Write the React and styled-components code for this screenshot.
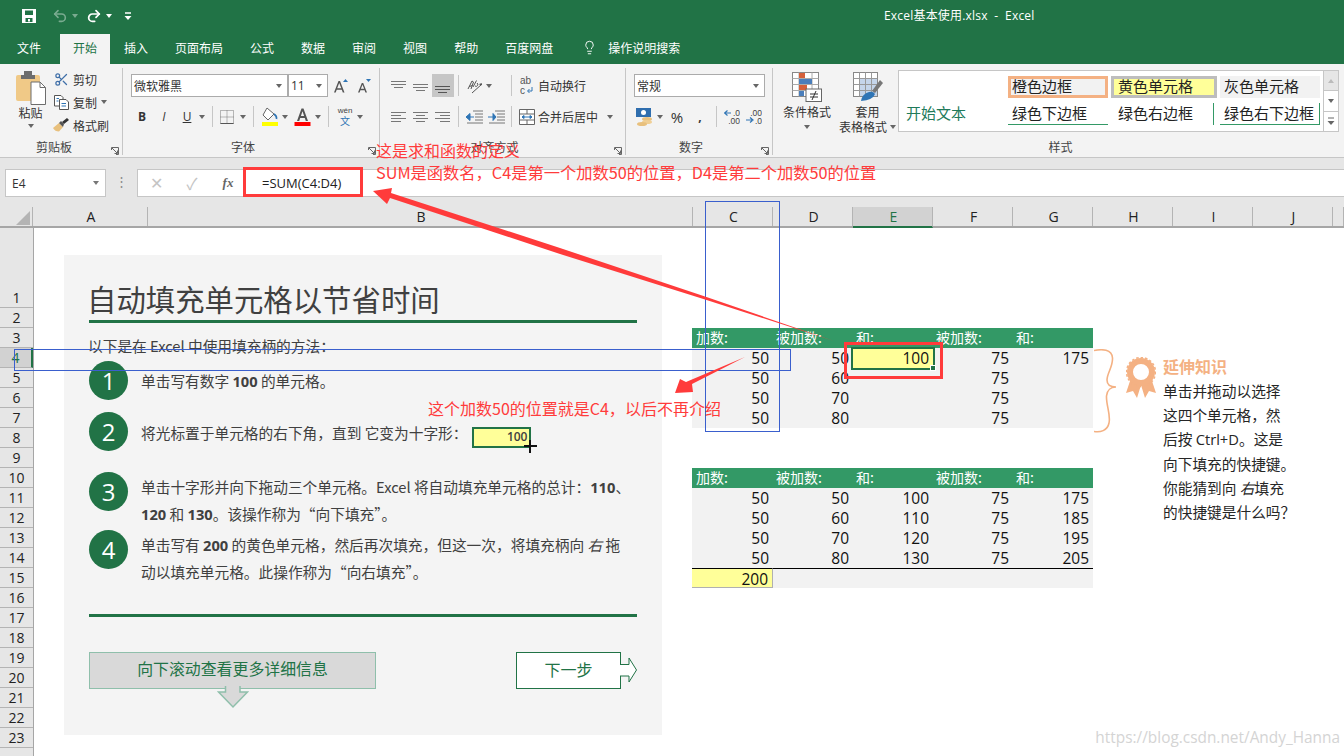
import styled, { createGlobalStyle } from "styled-components";
import { Redo2, Undo2, Scissors, Lightbulb } from "lucide-react";

const GREEN = "#217346";
const FONT = `"Open Sans", "Noto Sans CJK SC", sans-serif`;
const CJK = `"Noto Sans CJK SC", "Open Sans", sans-serif`;

// full width punctuation of the Chinese copy
const COMMA = "\uFF0C";
const COLON = "\uFF1A";
const QMARK = "\uFF1F";

const GlobalStyle = createGlobalStyle`
  html, body { margin: 0; padding: 0; background: #fff; }
  body { font-family: ${CJK}; color: #333; }
`;

const Page = styled.div`
  position: relative;
  width: 1344px;
  height: 756px;
  overflow: hidden;
  background: #fff;
`;

/* title bar */
const TitleBar = styled.div`
  display: flex;
  align-items: center;
  height: 32px;
  background: ${GREEN};
  color: #fff;
  padding-left: 22px;
`;
const QuickAccess = styled.div`
  display: flex;
  align-items: center;
  width: 862px;
  height: 100%;
`;
const QuickBtn = styled.span`
  display: flex;
  align-items: center;
  gap: 4px;
  margin-right: ${(p) => p.$gap || 0}px;
  opacity: ${(p) => (p.$dim ? 0.4 : 1)};
`;
const Caret = styled.span`
  display: inline-block;
  flex: none;
  width: 0;
  height: 0;
  margin-left: ${(p) => p.$ml || 0}px;
  margin-top: ${(p) => p.$mt || 0}px;
  border-left: 3.5px solid transparent;
  border-right: 3.5px solid transparent;
  border-top: 4px solid ${(p) => p.$color || "#666"};
`;
const DocTitle = styled.div`
  font-size: 12px;
  font-family: ${FONT};
  white-space: pre;
  letter-spacing: 0.2px;
  padding-bottom: 3px;
`;

/* tabs */
const TabBar = styled.div`
  display: flex;
  align-items: flex-end;
  gap: 1px;
  height: 32px;
  background: ${GREEN};
  padding-left: 4px;
`;
const Tab = styled.div`
  height: 30px;
  line-height: 27px;
  padding: 0 13px;
  font-size: 12px;
  color: ${(p) => (p.$active ? GREEN : "#fff")};
  background: ${(p) => (p.$active ? "#f3f3f3" : "transparent")};
  margin-right: ${(p) => p.$gap || 0}px;
`;
const TellMe = styled.div`
  display: flex;
  align-items: center;
  gap: 11px;
  height: 30px;
  padding-bottom: 4px;
  box-sizing: border-box;
  margin-left: 15px;
  font-size: 12px;
  color: #fff;
`;

/* ribbon */
const Ribbon = styled.div`
  display: flex;
  height: 94px;
  box-sizing: border-box;
  background: #f3f3f3;
  border-bottom: 1px solid #c6c6c6;
  color: #333;
  font-size: 12px;
`;
const Group = styled.div`
  position: relative;
  flex: none;
  width: ${(p) => p.$w}px;
  display: flex;
  flex-direction: column;
  box-sizing: border-box;
  padding-left: ${(p) => p.$pad || 0}px;
  margin-top: 4px;
  margin-bottom: 2px;
  border-right: ${(p) => (p.$last ? "none" : "1px solid #c6c6c6")};
`;
const GroupBody = styled.div`
  flex: 1;
  display: flex;
  min-height: 0;
`;
const GroupLabel = styled.div`
  height: 16px;
  line-height: 16px;
  text-align: center;
  font-size: 12px;
  color: #444;
  margin-left: ${(p) => -(p.$pad || 0)}px;
`;
const Launcher = styled.svg`
  position: absolute;
  right: 3px;
  bottom: 0;
`;
const RowStack = styled.div`
  display: flex;
  flex-direction: column;
  gap: 8px;
  padding-top: 6px;
`;
const ToolRow = styled.div`
  display: flex;
  align-items: center;
  height: 23px;
`;
const Tool = styled.span`
  display: flex;
  align-items: center;
  justify-content: center;
  flex: none;
  width: ${(p) => p.$w || 22}px;
  height: 23px;
  font-size: 12px;
  font-weight: ${(p) => (p.$bold ? 700 : 400)};
  font-style: ${(p) => (p.$italic ? "italic" : "normal")};
  text-decoration: ${(p) => (p.$under ? "underline" : "none")};
  font-family: ${(p) => (p.$latin ? FONT : CJK)};
  background: ${(p) => (p.$on ? "#c6c6c6" : "transparent")};
  margin-left: ${(p) => p.$ml || 0}px;
  margin-right: ${(p) => p.$gap || 0}px;
`;
const ToolSep = styled.span`
  flex: none;
  width: 1px;
  height: 21px;
  background: #c6c6c6;
  margin-left: ${(p) => p.$m || 6}px;
  margin-right: ${(p) => p.$mr ?? (p.$m || 6)}px;
`;
const TextTool = styled.span`
  display: flex;
  align-items: center;
  gap: ${(p) => p.$gap || 4}px;
  font-size: 12px;
  white-space: nowrap;
`;
const PercentMark = styled.span`
  font-size: 15px;
`;
const PasteBox = styled.div`
  width: 49px;
  margin-left: 6px;
  padding-top: 3px;
  display: flex;
  flex-direction: column;
  align-items: center;
  line-height: 15px;
  font-size: 12px;
`;
const ClipList = styled.div`
  display: flex;
  flex-direction: column;
  gap: 5px;
  padding-top: 2px;
  margin-left: -2px;
`;
const ClipItem = styled.div`
  display: flex;
  align-items: center;
  gap: 4px;
  height: 18px;
  white-space: nowrap;
`;
const ClipIcon = styled.span`
  display: flex;
  justify-content: center;
  width: 16px;
`;
const SelectBox = styled.div`
  display: flex;
  align-items: center;
  justify-content: space-between;
  width: ${(p) => p.$w}px;
  height: 23px;
  box-sizing: border-box;
  padding: 0 5px 0 2px;
  background: #fff;
  border: 1px solid #ababab;
  font-family: ${(p) => (p.$latin ? FONT : CJK)};
`;
const BigTool = styled.div`
  flex: none;
  width: ${(p) => p.$w || 60}px;
  padding-top: 4px;
  display: flex;
  flex-direction: column;
  align-items: center;
  text-align: center;
  line-height: 15px;
  font-size: 12px;
  white-space: nowrap;
`;
const BigLabel = styled.span`
  display: flex;
  align-items: center;
  gap: 3px;
  margin-top: ${(p) => p.$mt || 0}px;
`;
const Gallery = styled.div`
  display: grid;
  grid-template-columns: 109px 103px 109px 103px;
  grid-template-rows: 22px 22px;
  row-gap: 5px;
  flex: none;
  width: 426px;
  height: 62px;
  box-sizing: border-box;
  margin: 2px 0 0 0;
  padding-top: 5px;
  background: #fff;
  border: 1px solid #c6c6c6;
`;
const StyleCell = styled.div`
  height: 22px;
  box-sizing: border-box;
  display: flex;
  align-items: center;
  padding-left: ${(p) => p.$pl ?? 4}px;
  padding-bottom: 3px;
  font-size: 15px;
  color: ${(p) => p.$color || "#222"};
  background: ${(p) => p.$bg || "transparent"};
  border: ${(p) => p.$border || "none"};
  border-bottom: ${(p) => p.$bottom || ""};
  border-right: ${(p) => p.$right || ""};
  margin-right: ${(p) => p.$mr ?? 3}px;
  grid-column: ${(p) => p.$col || "auto"};
  grid-row: ${(p) => p.$row || "auto"};
  white-space: nowrap;
  overflow: visible;
`;
const GalleryScroll = styled.div`
  flex: none;
  display: flex;
  flex-direction: column;
  width: 15px;
  height: 62px;
  margin-top: 2px;
  box-sizing: border-box;
  border: 1px solid #c6c6c6;
  border-left: none;
`;
const ScrollBtn = styled.span`
  flex: 1;
  display: flex;
  align-items: center;
  justify-content: center;
  background: ${(p) => (p.$off ? "#e6e6e6" : "#fff")};
  border-bottom: ${(p) => (p.$last ? "none" : "1px solid #c6c6c6")};
`;
const UpCaret = styled(Caret)`
  transform: rotate(180deg);
`;

/* formula bar */
const FormulaBar = styled.div`
  display: flex;
  align-items: flex-start;
  height: 49px;
  box-sizing: border-box;
  padding: 11px 0 0 5px;
  background: #e6e6e6;
`;
const NameBox = styled.div`
  display: flex;
  align-items: center;
  justify-content: space-between;
  width: 101px;
  height: 28px;
  box-sizing: border-box;
  padding: 0 6px;
  background: #fff;
  border: 1px solid #c6c6c6;
  font-family: ${FONT};
  font-size: 12px;
`;
const Dots = styled.span`
  width: 31px;
  text-align: center;
  line-height: 24px;
  color: #8a8a8a;
  font-size: 13px;
  font-family: ${FONT};
`;
const FormulaBox = styled.div`
  flex: 1;
  display: flex;
  align-items: center;
  height: 28px;
  box-sizing: border-box;
  background: #fff;
  border-top: 1px solid #c6c6c6;
  border-bottom: 1px solid #c6c6c6;
  border-left: 1px solid #c6c6c6;
`;
const FormulaBtn = styled.span`
  width: 36px;
  text-align: center;
  font-size: ${(p) => (p.$serif ? 13 : 16)}px;
  font-family: ${(p) => (p.$serif ? `"Liberation Serif", serif` : FONT)};
  font-style: ${(p) => (p.$serif ? "italic" : "normal")};
  font-weight: ${(p) => (p.$serif ? 700 : 400)};
  color: ${(p) => (p.$serif ? "#666" : "#c4c4c4")};
`;
const FormulaText = styled.div`
  margin-left: 7px;
  padding-left: 9px;
  font-family: ${FONT};
  font-size: 13px;
  color: #222;
`;

/* column headers */
const ColBar = styled.div`
  display: flex;
  height: 21px;
  background: #e6e6e6;
  box-sizing: border-box;
  border-bottom: 2px solid #a6a6a6;
`;
const Corner = styled.div`
  flex: none;
  width: 33px;
  border-right: 1px solid #b4b4b4;
  box-sizing: border-box;
  display: flex;
  justify-content: flex-end;
  align-items: flex-end;
  padding: 0 2px 1px 0;
`;
const ColHead = styled.div`
  flex: none;
  width: ${(p) => p.$w}px;
  box-sizing: border-box;
  padding-left: 2px;
  text-align: center;
  font-family: ${FONT};
  font-size: 14px;
  line-height: 19px;
  height: ${(p) => (p.$on ? 21 : 19)}px;
  color: ${(p) => (p.$on ? GREEN : "#222")};
  background: ${(p) => (p.$on ? "#d2d2d2" : "transparent")};
  border-right: 1px solid #b4b4b4;
  border-bottom: ${(p) => (p.$on ? `2px solid ${GREEN}` : "none")};
`;

/* sheet */
const Sheet = styled.div`
  display: flex;
  height: 528px;
`;
const RowHeads = styled.div`
  flex: none;
  width: 34px;
  box-sizing: border-box;
  background: #e6e6e6;
  border-right: 1px solid #a6a6a6;
`;
const RowHead = styled.div`
  height: ${(p) => p.$h || 20}px;
  box-sizing: border-box;
  display: flex;
  align-items: flex-end;
  justify-content: center;
  font-family: ${FONT};
  font-size: 14px;
  line-height: 19px;
  color: ${(p) => (p.$on ? GREEN : "#222")};
  background: ${(p) => (p.$on ? "#d2d2d2" : "transparent")};
  border-bottom: 1px solid #b4b4b4;
  border-right: ${(p) => (p.$on ? `2px solid ${GREEN}` : "none")};
`;
const SheetBody = styled.div`
  flex: 1;
  display: flex;
  align-items: flex-start;
  padding: 27px 0 0 30px;
`;

/* guide card */
const Card = styled.div`
  flex: none;
  width: 598px;
  height: 480px;
  box-sizing: border-box;
  padding: 24px 25px 0;
  background: #f4f4f4;
`;
const Title = styled.h1`
  margin: 0 0 2px -2px;
  height: 39px;
  line-height: 39px;
  font-size: 29.4px;
  font-weight: 400;
  color: #404040;
  white-space: nowrap;
`;
const GreenRule = styled.div`
  height: 3px;
  background: ${GREEN};
`;
const Intro = styled.p`
  margin: 13px 0 0 -1px;
  height: 25px;
  line-height: 20px;
  font-size: 14.7px;
  color: #404040;
  white-space: nowrap;
`;
const Step = styled.div`
  display: flex;
  gap: 13px;
  height: ${(p) => p.$h}px;
`;
const StepNum = styled.div`
  flex: none;
  width: 39px;
  height: 39px;
  border-radius: 50%;
  background: ${GREEN};
  color: #fff;
  font-family: ${FONT};
  font-size: 24px;
  line-height: 39px;
  text-align: center;
`;
const StepText = styled.div`
  font-size: 14.7px;
  line-height: 26.5px;
  color: #404040;
  white-space: nowrap;
  margin-top: ${(p) => p.$mt || 0}px;

  & b {
    font-family: ${FONT};
    font-weight: 700;
  }
`;
const SampleCell = styled.span`
  display: inline-flex;
  align-items: center;
  justify-content: flex-end;
  vertical-align: -2px;
  width: 59px;
  height: 21px;
  box-sizing: border-box;
  margin-left: 5px;
  padding-right: 2px;
  background: #ffff99;
  border: 2px solid ${GREEN};
  font-family: ${FONT};
  font-size: 12px;
  font-weight: 600;
`;
const CardFooter = styled.div`
  display: flex;
  justify-content: space-between;
  align-items: flex-start;
  margin-top: 35px;
`;
const ScrollHint = styled.div`
  position: relative;
  width: 287px;
  height: 37px;
  box-sizing: border-box;
  background: #d9d9d9;
  border: 1.5px solid #8fbfab;
  color: ${GREEN};
  font-size: 15.9px;
  line-height: 31px;
  text-align: center;
`;
const NextStep = styled.div`
  position: relative;
  width: 105px;
  height: 37px;
  box-sizing: border-box;
  margin-right: 16px;
  background: #fff;
  border: 1px solid ${GREEN};
  color: ${GREEN};
  font-size: 16px;
  line-height: 33px;
  text-align: center;
`;
const HintArrow = styled.svg`
  position: absolute;
  left: 127px;
  top: 33px;
`;
const NextArrow = styled.svg`
  position: absolute;
  left: 103px;
  top: 4px;
`;

/* data tables */
const TablesCol = styled.div`
  flex: none;
  width: 401px;
  margin: 73px 0 0 30px;
  display: flex;
  flex-direction: column;
  gap: 40px;
`;
const DataTable = styled.div`
  display: grid;
  grid-template-columns: 81px repeat(4, 80px);
  grid-auto-rows: 20px;
  background: #f2f2f2;
`;
const HeadCell = styled.div`
  background: #339966;
  color: #fff;
  font-size: 14px;
  line-height: 19px;
  padding-left: ${(p) => p.$pl || 3}px;
  white-space: nowrap;
`;
const Cell = styled.div`
  box-sizing: border-box;
  font-family: ${FONT};
  font-size: 15.5px;
  line-height: 20px;
  color: #111;
  text-align: right;
  padding-right: 4px;
  background: ${(p) => p.$bg || "transparent"};
  border-top: ${(p) => (p.$line ? "1px solid #000" : "none")};
  border-right: ${(p) => (p.$total ? "1px solid #b0b0b0" : "none")};
  border-bottom: ${(p) => (p.$total ? "1px solid #b0b0b0" : "none")};
`;

/* side note */
const SideNote = styled.div`
  flex: none;
  display: flex;
  align-items: flex-start;
  margin: 94px 0 0 1px;
`;
const Medal = styled.svg`
  margin: 8px 7px 0 10px;
  flex: none;
`;
const BraceSvg = styled.svg`
  flex: none;
`;
const NoteText = styled.div`
  font-size: 14.7px;
  line-height: 24.2px;
  color: #262626;
  white-space: nowrap;

  & span {
    font-family: ${FONT};
  }
`;
const NoteHead = styled.div`
  font-size: 16px;
  font-weight: 700;
  line-height: 20px;
  margin-top: 7px;
  margin-bottom: 3px;
  color: #f4b183;
`;

/* markup drawn over the screenshot */
const Markup = styled.svg`
  position: absolute;
  left: 0;
  top: 0;
  pointer-events: none;
`;
const Frame = styled.div`
  position: absolute;
  left: ${(p) => p.$x}px;
  top: ${(p) => p.$y}px;
  width: ${(p) => p.$w}px;
  height: ${(p) => p.$h}px;
  box-sizing: border-box;
  border: ${(p) => p.$b || 3}px solid ${(p) => p.$c || "#ff3b3b"};
`;
const Handle = styled.div`
  position: absolute;
  right: -3px;
  bottom: -3px;
  width: 6px;
  height: 6px;
  background: ${GREEN};
  border: 1px solid #fff;
  box-sizing: border-box;
`;
const RedNote = styled.div`
  position: absolute;
  left: ${(p) => p.$x}px;
  top: ${(p) => p.$y}px;
  font-size: ${(p) => p.$s || 16}px;
  line-height: 20px;
  color: #ff3b3b;
  white-space: nowrap;
`;
const Watermark = styled.div`
  position: absolute;
  right: 4px;
  top: 729px;
  font-family: ${FONT};
  font-size: 15.4px;
  line-height: 18px;
  color: #d4d4d4;
`;

const Lines = ({ rows, on }) => (
  <svg width="16" height="16" viewBox="0 0 16 16">
    {rows.map(([x1, x2, y], i) => (
      <line key={i} x1={x1} x2={x2} y1={y + 0.5} y2={y + 0.5} stroke={on ? "#555" : "#777"} strokeWidth="1" />
    ))}
  </svg>
);

const LauncherIcon = () => (
  <Launcher width="8" height="8" viewBox="0 0 8 8">
    <path d="M.5 3V.5H7.5V7.5H5M1 1l5 5M3.5 6.5H6.5V3.5" fill="none" stroke="#666" strokeWidth="1" />
  </Launcher>
);

const SaveIcon = () => (
  <svg width="14" height="14" viewBox="0 0 14 14">
    <path fillRule="evenodd" fill="#fff" d="M0 0H14V14H0ZM3 1.5V6H11V1.5ZM3.5 9V13H10.5V9ZM6 10H8V12.5H6Z" />
  </svg>
);

const CustomizeIcon = () => (
  <svg width="8" height="9" viewBox="0 0 8 9">
    <path d="M1 1H7" stroke="#fff" strokeWidth="1.5" />
    <path d="M0.5 4H7.5L4 8Z" fill="#fff" />
  </svg>
);

const PasteIcon = () => (
  <svg width="30" height="34" viewBox="0 0 30 34">
    <rect x="0" y="4" width="24" height="26" rx="2" fill="#f0c987" />
    <rect x="8" y="0" width="8" height="6" fill="#6d6d6d" />
    <rect x="5" y="4" width="14" height="4" fill="#6d6d6d" />
    <path d="M15 11H24L29.5 16.5V33.5H15Z" fill="#fff" stroke="#6d6d6d" />
    <path d="M24 11V16.5H29.5" fill="none" stroke="#6d6d6d" />
  </svg>
);

const CopyIcon = () => (
  <svg width="15" height="15" viewBox="0 0 15 15">
    <path d="M.5.5H7L9 2.5V11H.5Z" fill="#fff" stroke="#555" />
    <path d="M5.5 4.5H12L14.5 7V14.5H5.5Z" fill="#fff" stroke="#555" />
    <path d="M2.5 3.5H5M2.5 6H4.5M7.5 8.5H12M7.5 11H12" stroke="#2f75b5" />
  </svg>
);

const BrushIcon = () => (
  <svg width="16" height="14" viewBox="0 0 16 14">
    <path d="M0 10L6 5L10 9L6 13.5Q2 13.5 0 10Z" fill="#e8c07d" />
    <path d="M6 5L8 3L11 6L10 9Z" fill="#555" />
    <path d="M9 4L14 0L16 2L11 6Z" fill="#333" />
  </svg>
);

const BorderIcon = () => (
  <svg width="14" height="14" viewBox="0 0 14 14">
    <path d="M.5.5H13.5V13.5H.5ZM7 .5V13.5M.5 7H13.5" fill="none" stroke="#777" strokeDasharray="1 1" />
    <path d="M.5 13.5H13.5" stroke="#555" />
  </svg>
);

const FillIcon = () => (
  <svg width="18" height="19" viewBox="0 0 18 19">
    <path d="M6 1L13 7L7 13L2 8Z" fill="#fff" stroke="#666" />
    <path d="M13 7Q16 9 15.5 12" fill="none" stroke="#2f75b5" strokeWidth="1.6" />
    <rect x="1" y="15" width="16" height="4" fill="#ffff00" />
  </svg>
);

const ColorAIcon = () => (
  <svg width="17" height="19" viewBox="0 0 17 19">
    <path d="M3 14L7.5 1.5H9.5L14 14H11.8L10.8 11H6.2L5.2 14ZM6.9 9H10.1L8.5 4.2Z" fill="#555" />
    <rect x="0.5" y="15" width="16" height="4" fill="#ff0000" />
  </svg>
);

const GrowAIcon = ({ down }) => (
  <svg width="15" height="15" viewBox="0 0 15 15">
    <path
      d={down ? "M1 14.5L4.8 5H6.2L10 14.5H8.4L7.6 12.2H3.4L2.6 14.5ZM3.9 10.8H7.1L5.5 6.8Z" : "M0 14.5L4.5 3H6L10.5 14.5H8.8L7.8 11.7H2.7L1.7 14.5ZM3.2 10.2H7.3L5.2 5Z"}
      fill="#555"
    />
    <path d={down ? "M9 1H14L11.5 4Z" : "M9 4L11.5 1L14 4Z"} fill="#2f75b5" />
  </svg>
);

const PhoneticIcon = () => (
  <svg width="18" height="22" viewBox="0 0 18 22">
    <text x="9" y="7" textAnchor="middle" fontFamily="Liberation Sans" fontSize="8" fill="#444">wén</text>
    <text x="9" y="19" textAnchor="middle" fontFamily="Noto Sans CJK SC" fontSize="10" fill="#2f75b5">文</text>
  </svg>
);

const OrientIcon = () => (
  <svg width="18" height="16" viewBox="0 0 18 16">
    <path d="M2 11L6 3L7.5 4L5 11M3.2 8.5L6.5 7.5" fill="none" stroke="#555" />
    <path d="M7 9L10.5 2.5M9 8A1.8 1.8 0 1 0 11 5" fill="none" stroke="#555" />
    <path d="M6 15L16 6" stroke="#555" />
    <path d="M16 5L13 6L15 8Z" fill="#555" />
  </svg>
);

const WrapIcon = () => (
  <svg width="14" height="20" viewBox="0 0 14 20">
    <text x="0" y="8" fontFamily="Liberation Sans" fontSize="10" fill="#555">ab</text>
    <text x="0" y="18" fontFamily="Liberation Sans" fontSize="10" fill="#555">c</text>
    <path d="M12 11V15H8M9.5 13L7.5 15L9.5 17" fill="none" stroke="#2f75b5" />
  </svg>
);

const MergeIcon = () => (
  <svg width="16" height="16" viewBox="0 0 16 16">
    <path d="M.5.5H15.5V15.5H.5ZM.5 5H15.5M.5 11H15.5M8 .5V5M8 11V15.5" fill="#fff" stroke="#666" />
    <path d="M3 8H13M3 8L5 6.5V9.5ZM13 8L11 6.5V9.5Z" fill="#2f75b5" stroke="#2f75b5" />
  </svg>
);

const IndentIcon = ({ flip }) => (
  <svg width="17" height="14" viewBox="0 0 17 14">
    <path d="M7 1H17M9 4H17M9 7H17M9 10H17M1 13H17" stroke="#777" />
    <path d={flip ? "M0 7H5M5 3.5L8 7L5 10.5Z" : "M3 7H8M4 3.5L0 7L4 10.5Z"} fill="#2f75b5" stroke="#2f75b5" />
  </svg>
);

const CurrencyIcon = () => (
  <svg width="18" height="19" viewBox="0 0 18 19">
    <rect x="0" y="1" width="15" height="9" fill="#2f6eae" />
    <circle cx="7.5" cy="5.5" r="2.5" fill="#fff" />
    <ellipse cx="11" cy="12" rx="5" ry="2" fill="#e8c07d" />
    <ellipse cx="11" cy="15" rx="5" ry="2" fill="#f0cf95" />
    <ellipse cx="6" cy="17" rx="5" ry="2" fill="#e8c07d" />
  </svg>
);

const DecimalIcon = ({ more }) => (
  <svg width="16" height="16" viewBox="0 0 16 16">
    <text x="16" y="7" textAnchor="end" fontFamily="Liberation Sans" fontSize="8.5" fill="#444">{more ? ".00" : ".0"}</text>
    <text x="16" y="15" textAnchor="end" fontFamily="Liberation Sans" fontSize="8.5" fill="#444">{more ? ".0" : ".00"}</text>
    <path d={more ? "M0 11H6M4 8.5L7 11L4 13.5" : "M1 4H7M3.5 1.5L.5 4L3.5 6.5"} fill="none" stroke="#2f75b5" strokeWidth="1.2" />
  </svg>
);

const CondFormatIcon = () => (
  <svg width="30" height="30" viewBox="0 0 30 30">
    <rect x=".5" y=".5" width="26" height="24" fill="#fff" stroke="#888" />
    <path d="M7 .5V24.5M20 .5V24.5M.5 6.5H26.5M.5 12.5H26.5M.5 18.5H26.5" stroke="#aaa" />
    <rect x="7" y="1" width="6" height="5" fill="#d5603a" />
    <rect x="7" y="7" width="13" height="5" fill="#4a7ebb" />
    <rect x="7" y="13" width="8" height="5" fill="#d5603a" />
    <rect x="7" y="19" width="5" height="5" fill="#4a7ebb" />
    <rect x="14" y="17" width="15.5" height="12.5" fill="#fff" stroke="#666" />
    <path d="M18 22H26M18 25H26M20 28L24 19" stroke="#333" fill="none" />
  </svg>
);

const TableFormatIcon = () => (
  <svg width="30" height="30" viewBox="0 0 30 30">
    <rect x=".5" y=".5" width="24" height="24" fill="#fff" stroke="#888" />
    <rect x="7" y="7" width="17" height="17" fill="#c5d5ea" />
    <path d="M6.5 .5V24.5M12.5 .5V24.5M18.5 .5V24.5M.5 6.5H24.5M.5 12.5H24.5M.5 18.5H24.5" stroke="#999" />
    <path d="M19 19L27 8L30 11L22 21Z" fill="#777" />
    <path d="M8 29Q9 22 16 20Q20 19 22 22Q20 28 8 29Z" fill="#2f75b5" />
  </svg>
);

const MedalIcon = () => (
  <Medal width="30" height="42" viewBox="0 0 30 42">
    <path d="M5 21L0 36L7 34L11 41L15 28L19 41L23 34L30 36L25 21Z" fill="#f4b183" />
    <circle cx="15" cy="15" r="11" fill="#fff" stroke="#f4b183" strokeWidth="6" />
    <circle cx="15" cy="15" r="14.5" fill="none" stroke="#f4b183" strokeWidth="1.5" strokeDasharray="2.5 2" />
  </Medal>
);

const Brace = () => (
  <BraceSvg width="22" height="84" viewBox="0 0 22 84">
    <path
      d="M0 1.5C8 0 18 0 18.5 9C19 18 13 24 13 31C13 36 17 38 22 38C17 38 13 41 12.5 47C12 56 17 66 15 74C13.5 82 6 83.5 0 82.5"
      fill="none"
      stroke="#f4b183"
      strokeWidth="1.6"
    />
  </BraceSvg>
);

const tabs = ["插入", "页面布局", "公式", "数据", "审阅", "视图", "帮助", "百度网盘"];
const cols = [
  ["A", 115],
  ["B", 545],
  ["C", 80],
  ["D", 80],
  ["E", 80, true],
  ["F", 80],
  ["G", 80],
  ["H", 80],
  ["I", 80],
  ["J", 80],
  ["", 11],
];
const rowNums = Array.from({ length: 24 }, (_, i) => i + 1);
const heads = [
  ["加数:", 4],
  ["被加数:", 3],
  ["和:", 3],
  ["被加数:", 3],
  ["和:", 3],
];
const fullRows = [
  [50, 50, 100, 75, 175],
  [50, 60, 110, 75, 185],
  [50, 70, 120, 75, 195],
  [50, 80, 130, 75, 205],
];
const partRows = [
  [50, 50, 100, 75, 175],
  [50, 60, "", 75, ""],
  [50, 70, "", 75, ""],
  [50, 80, "", 75, ""],
];

function TableHead() {
  return heads.map(([h, pl], i) => (
    <HeadCell key={i} $pl={pl}>
      {h}
    </HeadCell>
  ));
}

function App() {
  return (
    <Page>
      <GlobalStyle />
      <TitleBar>
        <QuickAccess>
          <QuickBtn $gap={16}>
            <SaveIcon />
          </QuickBtn>
          <QuickBtn $gap={8} $dim>
            <Undo2 size={16} strokeWidth={2.4} />
            <Caret $color="#fff" />
          </QuickBtn>
          <QuickBtn $gap={12}>
            <Redo2 size={16} strokeWidth={2.6} />
            <Caret $color="#fff" />
          </QuickBtn>
          <CustomizeIcon />
        </QuickAccess>
        <DocTitle>Excel基本使用.xlsx  -  Excel</DocTitle>
      </TitleBar>
      <TabBar>
        <Tab $gap={5}>文件</Tab>
        <Tab $active>开始</Tab>
        {tabs.map((t) => (
          <Tab key={t}>{t}</Tab>
        ))}
        <TellMe>
          <Lightbulb size={15} strokeWidth={1.5} />
          操作说明搜索
        </TellMe>
      </TabBar>
      <Ribbon>
        <Group $w={123}>
          <GroupBody>
            <PasteBox>
              <PasteIcon />
              粘贴
              <Caret $mt={4} />
            </PasteBox>
            <ClipList>
              <ClipItem>
                <ClipIcon>
                  <Scissors size={15} color="#3f6fa8" />
                </ClipIcon>
                剪切
              </ClipItem>
              <ClipItem>
                <ClipIcon>
                  <CopyIcon />
                </ClipIcon>
                复制
                <Caret />
              </ClipItem>
              <ClipItem>
                <ClipIcon>
                  <BrushIcon />
                </ClipIcon>
                格式刷
              </ClipItem>
            </ClipList>
          </GroupBody>
          <GroupLabel $pad={14}>剪贴板</GroupLabel>
          <LauncherIcon />
        </Group>
        <Group $w={257} $pad={8}>
          <GroupBody>
            <RowStack>
              <ToolRow>
                <SelectBox $w={157}>
                  微软雅黑
                  <Caret />
                </SelectBox>
                <SelectBox $w={40} $latin>
                  11
                  <Caret />
                </SelectBox>
                <Tool $w={18} $ml={4} $gap={5}>
                  <GrowAIcon />
                </Tool>
                <Tool $w={18}>
                  <GrowAIcon down />
                </Tool>
              </ToolRow>
              <ToolRow>
                <Tool $latin $bold>B</Tool>
                <Tool $latin $italic>I</Tool>
                <Tool $w={24} $latin $under>U</Tool>
                <Caret />
                <ToolSep $m={7} />
                <Tool $w={14} $gap={6}>
                  <BorderIcon />
                </Tool>
                <Caret />
                <ToolSep $m={7} />
                <Tool $w={18} $gap={3}>
                  <FillIcon />
                </Tool>
                <Caret />
                <Tool $w={17} $ml={6} $gap={4}>
                  <ColorAIcon />
                </Tool>
                <Caret />
                <ToolSep $m={7} />
                <Tool $w={18} $gap={3}>
                  <PhoneticIcon />
                </Tool>
                <Caret />
              </ToolRow>
            </RowStack>
          </GroupBody>
          <GroupLabel $pad={24}>字体</GroupLabel>
          <LauncherIcon />
        </Group>
        <Group $w={246} $pad={8}>
          <GroupBody>
            <RowStack>
              <ToolRow>
                <Tool>
                  <Lines rows={[[0, 15, 3], [0, 15, 6], [3, 12, 9]]} />
                </Tool>
                <Tool>
                  <Lines rows={[[0, 15, 6], [0, 15, 9], [3, 12, 12]]} />
                </Tool>
                <Tool $on>
                  <Lines on rows={[[0, 15, 8], [0, 15, 11], [3, 12, 14]]} />
                </Tool>
                <ToolSep $m={4} />
                <Tool $w={32}>
                  <OrientIcon />
                  <Caret $ml={2} />
                </Tool>
                <ToolSep $m={16} $mr={8} />
                <TextTool $gap={4}>
                  <WrapIcon />
                  自动换行
                </TextTool>
              </ToolRow>
              <ToolRow>
                <Tool>
                  <Lines rows={[[0, 15, 3], [0, 10, 6], [0, 15, 9], [0, 10, 12]]} />
                </Tool>
                <Tool>
                  <Lines rows={[[0, 15, 3], [3, 12, 6], [0, 15, 9], [3, 12, 12]]} />
                </Tool>
                <Tool>
                  <Lines rows={[[0, 15, 3], [5, 15, 6], [0, 15, 9], [5, 15, 12]]} />
                </Tool>
                <ToolSep $m={4} />
                <Tool>
                  <IndentIcon />
                </Tool>
                <Tool>
                  <IndentIcon flip />
                </Tool>
                <ToolSep $m={4} $mr={7} />
                <TextTool $gap={3}>
                  <MergeIcon />
                  合并后居中
                  <Caret $ml={6} />
                </TextTool>
              </ToolRow>
            </RowStack>
          </GroupBody>
          <GroupLabel $pad={24}>对齐方式</GroupLabel>
          <LauncherIcon />
        </Group>
        <Group $w={147} $pad={8}>
          <GroupBody>
            <RowStack>
              <ToolRow>
                <SelectBox $w={131}>
                  常规
                  <Caret />
                </SelectBox>
              </ToolRow>
              <ToolRow>
                <Tool $gap={1}>
                  <CurrencyIcon />
                </Tool>
                <Caret />
                <Tool $w={28} $latin>
                  <PercentMark>%</PercentMark>
                </Tool>
                <Tool $w={18} $latin $bold>,</Tool>
                <ToolSep $m={7} />
                <Tool $w={16} $gap={6}>
                  <DecimalIcon />
                </Tool>
                <Tool $w={16}>
                  <DecimalIcon more />
                </Tool>
              </ToolRow>
            </RowStack>
          </GroupBody>
          <GroupLabel $pad={24}>数字</GroupLabel>
          <LauncherIcon />
        </Group>
        <Group $w={571} $last $pad={4}>
          <GroupBody>
            <BigTool $w={60}>
              <CondFormatIcon />
              <BigLabel $mt={2}>条件格式</BigLabel>
              <Caret $mt={6} />
            </BigTool>
            <BigTool $w={61}>
              <TableFormatIcon />
              <BigLabel $mt={2}>套用</BigLabel>
              <BigLabel>
                表格格式
                <Caret />
              </BigLabel>
            </BigTool>
            <Gallery>
              <StyleCell $col={1} $row={2} $color="#217a5a" $pl={7}>开始文本</StyleCell>
              <StyleCell $col={2} $row={1} $bg="#f2f2f2" $border="3px solid #f4b183" $pl={1}>橙色边框</StyleCell>
              <StyleCell $col={3} $row={1} $bg="#ffff99" $pl={4} $border="3px solid #bdbdbd">黄色单元格</StyleCell>
              <StyleCell $col={4} $row={1} $bg="#f2f2f2">灰色单元格</StyleCell>
              <StyleCell $col={2} $row={2} $bottom="1px solid #339966">绿色下边框</StyleCell>
              <StyleCell $col={3} $row={2} $pl={7} $mr={6} $right="1px solid #339966">绿色右边框</StyleCell>
              <StyleCell $col={4} $row={2} $bottom="1px solid #339966" $right="1px solid #339966">绿色右下边框</StyleCell>
            </Gallery>
            <GalleryScroll>
              <ScrollBtn $off>
                <UpCaret $color="#bbb" />
              </ScrollBtn>
              <ScrollBtn>
                <Caret />
              </ScrollBtn>
              <ScrollBtn $last>
                <svg width="8" height="9" viewBox="0 0 8 9">
                  <path d="M1 1H7" stroke="#666" />
                  <path d="M.5 4H7.5L4 8Z" fill="#666" />
                </svg>
              </ScrollBtn>
            </GalleryScroll>
          </GroupBody>
          <GroupLabel>样式</GroupLabel>
        </Group>
      </Ribbon>
      <FormulaBar>
        <NameBox>
          E4
          <Caret $color="#777" />
        </NameBox>
        <Dots>⋮</Dots>
        <FormulaBox>
          <FormulaBtn>✕</FormulaBtn>
          <FormulaBtn>✓</FormulaBtn>
          <FormulaBtn $serif>fx</FormulaBtn>
          <FormulaText>=SUM(C4:D4)</FormulaText>
        </FormulaBox>
      </FormulaBar>
      <ColBar>
        <Corner>
          <svg width="14" height="14" viewBox="0 0 14 14">
            <path d="M14 0V14H0Z" fill="#b4b4b4" />
          </svg>
        </Corner>
        {cols.map(([c, w, on]) => (
          <ColHead key={c || "K"} $w={w} $on={on}>
            {c}
          </ColHead>
        ))}
      </ColBar>
      <Sheet>
        <RowHeads>
          {rowNums.map((n) => (
            <RowHead key={n} $h={n === 1 ? 80 : 20} $on={n === 4}>
              {n < 24 ? n : ""}
            </RowHead>
          ))}
        </RowHeads>
        <SheetBody>
          <Card>
            <Title>自动填充单元格以节省时间</Title>
            <GreenRule />
            <Intro>以下是在 Excel 中使用填充柄的方法{COLON}</Intro>
            <Step $h={51}>
              <StepNum>1</StepNum>
              <StepText $mt={7}>
                单击写有数字 <b>100</b> 的单元格。
              </StepText>
            </Step>
            <Step $h={60}>
              <StepNum>2</StepNum>
              <StepText $mt={8}>
                将光标置于单元格的右下角{COMMA}直到 它变为十字形{COLON}
                <SampleCell>100</SampleCell>
              </StepText>
            </Step>
            <Step $h={58}>
              <StepNum>3</StepNum>
              <StepText $mt={2}>
                单击十字形并向下拖动三个单元格。Excel 将自动填充单元格的总计{COLON}<b>110</b>、
                <br />
                <b>120</b> 和 <b>130</b>。该操作称为“向下填充”。
              </StepText>
            </Step>
            <Step $h={84}>
              <StepNum>4</StepNum>
              <StepText $mt={2}>
                单击写有 <b>200</b> 的黄色单元格{COMMA}然后再次填充{COMMA}但这一次{COMMA}将填充柄向 <i>右</i> 拖
                <br />
                动以填充单元格。此操作称为“向右填充”。
              </StepText>
            </Step>
            <GreenRule />
            <CardFooter>
              <ScrollHint>
                向下滚动查看更多详细信息
                <HintArrow width="32" height="24" viewBox="0 0 32 24">
                  <path d="M8.5 0V6H1.5L16 21L30.5 6H23V0" fill="#d9d9d9" stroke="#8fbfab" strokeWidth="1.5" />
                </HintArrow>
              </ScrollHint>
              <NextStep>
                下一步
                <NextArrow width="18" height="27" viewBox="0 0 18 27">
                  <path d="M0 7.5H9V1L16.5 13L9 25V19H0" fill="#fff" stroke={GREEN} strokeWidth="1" />
                </NextArrow>
              </NextStep>
            </CardFooter>
          </Card>
          <TablesCol>
            <DataTable>
              <TableHead />
              {partRows.flat().map((v, i) => (
                <Cell key={i} $bg={i === 2 ? "#ffff99" : undefined}>
                  {v}
                </Cell>
              ))}
            </DataTable>
            <DataTable>
              <TableHead />
              {fullRows.flat().map((v, i) => (
                <Cell key={i}>{v}</Cell>
              ))}
              <Cell $line $total $bg="#ffff99">200</Cell>
              <Cell $line />
              <Cell $line />
              <Cell $line />
              <Cell $line />
            </DataTable>
          </TablesCol>
          <SideNote>
            <Brace />
            <MedalIcon />
            <NoteText>
              <NoteHead>延伸知识</NoteHead>
              单击并拖动以选择
              <br />
              这四个单元格{COMMA}然
              <br />
              后按 <span>Ctrl+D</span>。这是
              <br />
              向下填充的快捷键。
              <br />
              你能猜到向 <i>右</i>填充
              <br />
              的快捷键是什么吗{QMARK}
            </NoteText>
          </SideNote>
        </SheetBody>
      </Sheet>

      <Frame $x={851} $y={347} $w={84} $h={23} $b={2} $c={GREEN}>
        <Handle />
      </Frame>
      <Frame $x={243} $y={167} $w={120} $h={30} />
      <Frame $x={844} $y={342} $w={99} $h={37} />
      <Frame $x={705} $y={201} $w={75} $h={231} $b={1} $c="#3a5fcd" />
      <Frame $x={14} $y={349} $w={777} $h={22} $b={1} $c="#3a5fcd" />
      <Markup width="1344" height="756" viewBox="0 0 1344 756">
        <polygon
          fill="#ff3b3b"
          points="373,191 392,188 391,193 560,248 705,296.5 834,341 705,299.5 560,254 390,198 387,204"
        />
        <polygon fill="#ff3b3b" points="745,357 692,384 693,392 675,393 680,379 686,382" />
        <path d="M530 440V453M524 446H537" stroke="#111" strokeWidth="2" fill="none" />
      </Markup>
      <RedNote $x={376} $y={140}>这是求和函数的定义</RedNote>
      <RedNote $x={376} $y={162} $s={16.25}>SUM是函数名{COMMA}C4是第一个加数50的位置{COMMA}D4是第二个加数50的位置</RedNote>
      <RedNote $x={428} $y={398}>这个加数50的位置就是C4{COMMA}以后不再介绍</RedNote>
      <Watermark>https://blog.csdn.net/Andy_Hanna</Watermark>
    </Page>
  );
}

export default App;
